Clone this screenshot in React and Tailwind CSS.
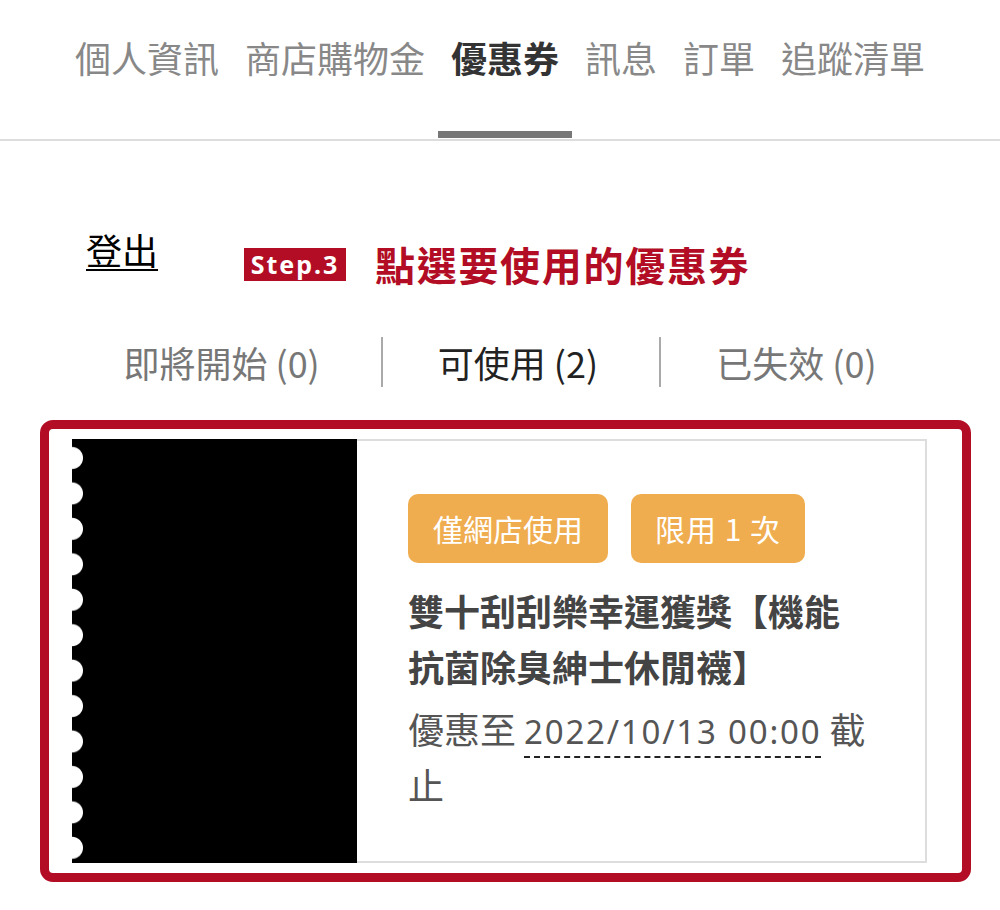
export default function App() {
  const navItems = ["個人資訊", "商店購物金", "優惠券", "訊息", "訂單", "追蹤清單"];
  return (
    <div className="w-[1000px] h-[910px] bg-white font-['Noto_Sans_CJK_TC','Noto_Sans',sans-serif] overflow-hidden">
      {/* Top nav */}
      <div className="flex justify-center border-b-2 border-[#dddddd]">
        {navItems.map((t) => {
          const active = t === "優惠券";
          return (
            <div key={t} className="flex flex-col h-[139px] px-[13px]">
              <div
                className={
                  active
                    ? "pt-[35px] text-[36px] leading-[44px] font-bold text-[#333333] whitespace-nowrap"
                    : "pt-[35px] text-[36px] leading-[44px] text-[#888888] whitespace-nowrap"
                }
              >
                {t}
              </div>
              <div className={active ? "mt-auto mb-[1px] h-[7px] -mx-[13px] bg-[#777777]" : "mt-auto mb-[1px] h-[7px]"} />
            </div>
          );
        })}
      </div>

      {/* Logout + step heading */}
      <div className="flex items-start pl-[86px] mt-[86px]">
        <a className="text-[36px] leading-[44px] text-black underline underline-offset-[4px] decoration-[2px] whitespace-nowrap">
          登出
        </a>
        <div className="flex items-center ml-[86px] mt-[13px] h-[48px]">
          <div className="w-[102px] h-[33px] bg-[#b20d24] flex items-center justify-center text-white font-['Noto_Sans',sans-serif] font-bold text-[25px] leading-none tracking-[2px]">
            Step.3
          </div>
          <div className="ml-[29px] text-[#b20d24] font-bold text-[40px] leading-[48px] tracking-[1.7px] whitespace-nowrap">
            點選要使用的優惠券
          </div>
        </div>
      </div>

      {/* Sub tabs */}
      <div className="flex justify-center items-center mt-[49px] h-[50px]">
        <div className="text-[36px] leading-[50px] text-[#777777] whitespace-nowrap">即將開始 (0)</div>
        <div className="w-[2px] h-[50px] bg-[#aaaaaa] ml-[61px] mr-[55px]" />
        <div className="text-[36px] leading-[50px] text-[#222222] whitespace-nowrap">可使用 (2)</div>
        <div className="w-[2px] h-[50px] bg-[#aaaaaa] ml-[61px] mr-[55px]" />
        <div className="text-[36px] leading-[50px] text-[#777777] whitespace-nowrap">已失效 (0)</div>
      </div>

      {/* Highlighted coupon */}
      <div className="ml-[40px] mt-[33px] w-[931px] border-[9px] border-[#b20d24] rounded-[13px] pt-[10px] pb-[10px] pl-[23px] pr-[35px]">
        <div className="flex h-[424px]">
          <div className="w-[285px] h-[424px] shrink-0 bg-black bg-[radial-gradient(circle_at_0_17.7px,#ffffff_10.5px,transparent_11.5px)] bg-[length:100%_35.45px] bg-[position:0_1.3px]" />
          <div className="flex-1 border-y-2 border-r-2 border-[#dddddd] pl-[51px] pr-[28px] pt-[53px]">
            <div className="flex gap-[23px]">
              <div className="h-[69px] px-[25px] rounded-[10px] bg-[#efad4f] text-white text-[30px] flex items-center whitespace-nowrap">
                僅網店使用
              </div>
              <div className="h-[69px] px-[24px] rounded-[10px] bg-[#efad4f] text-white text-[30px] tracking-[1px] flex items-center whitespace-nowrap">
                限用 1 次
              </div>
            </div>
            <div className="mt-[19px] text-[36px] leading-[56px] font-bold text-[#444444] whitespace-nowrap">
              雙十刮刮樂幸運獲獎【機能
              <br />
              抗菌除臭紳士休閒襪】
            </div>
            <div className="mt-[8px] text-[36px] leading-[52px] text-[#555555] whitespace-nowrap">
              <div>
                優惠至{" "}
                <span className="font-['Noto_Sans','Noto_Sans_CJK_TC',sans-serif] text-[33px] tracking-[1.8px] border-b-2 border-dashed border-[#222222] pb-[2px]">
                  2022/10/13 00:00
                </span>{" "}
                截
              </div>
              <div>止</div>
            </div>
          </div>
        </div>
      </div>
    </div>
  );
}
